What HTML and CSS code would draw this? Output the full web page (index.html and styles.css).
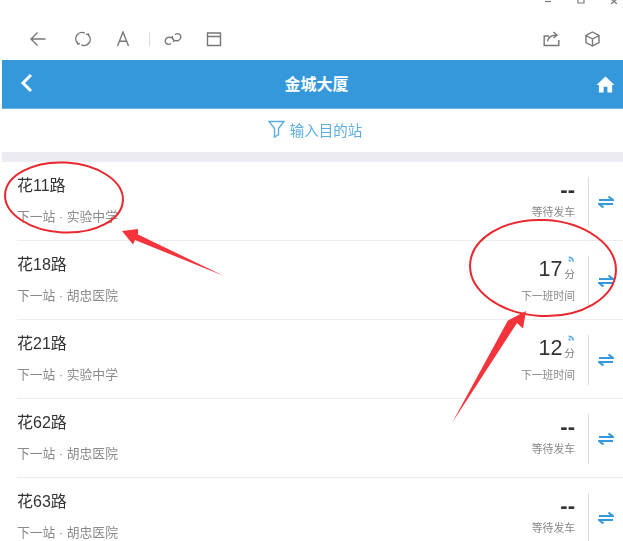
FILE: index.html
```html
<!DOCTYPE html>
<html lang="zh">
<head>
<meta charset="utf-8">
<title>金城大厦</title>
<link rel="stylesheet" href="styles.css">
</head>
<body>
<div class="shot">
  <div class="winbar">
    <svg class="wc" viewBox="0 0 10 4"><path d="M2 1.5H8"/></svg>
    <svg class="wc" viewBox="0 0 10 4"><path d="M2 -1V3H8V-1"/></svg>
    <svg class="wc" viewBox="0 0 10 4"><path d="M2 -1L5 1.5L8 -1M2 4L5 1.5L8 4"/></svg>
  </div>
  <div class="toolbar">
    <svg class="ti t-back" viewBox="0 0 16 16"><path d="M15.5 8H1M7.5 1.5L1 8L7.5 14.5"/></svg>
    <svg class="ti t-ref" viewBox="0 0 16 16"><path d="M2.6 12A6.2 6.2 0 0 1 9.8 2.1M14 5.2L13.3 2.8L11 3.6M13.4 4A6.2 6.2 0 0 1 6.2 13.9M2 10.8L2.7 13.2L5 12.4"/></svg>
    <svg class="ti t-a" viewBox="0 0 14 16"><path d="M1.5 15L7 1L12.5 15M3.4 10.2H10.6"/></svg>
    <span class="tsep"></span>
    <svg class="ti t-link" viewBox="0 0 18 16"><path d="M7 12.5C4 14.5 1 12.5 1.2 9.8C1.4 7 4.6 5.4 7.5 6.6C9.5 7.5 10.2 9.4 9.4 11M11 3.5C14 1.5 17 3.5 16.8 6.2C16.6 9 13.4 10.6 10.5 9.4C8.5 8.5 7.8 6.6 8.6 5"/></svg>
    <svg class="ti t-win" viewBox="0 0 16 16"><path d="M1.5 2H14.5V14.5H1.5ZM1.5 5.5H14.5"/></svg>
    <svg class="ti t-share" viewBox="0 0 17 16"><path d="M6 5H1.2V14.5H15.8V9M4.5 10.5C5 6.5 8 4.3 13 4.3M10.5 1L14 4.3L10.5 7"/></svg>
    <svg class="ti t-cube" viewBox="0 0 15 16"><path d="M7.5 1L14 4.5V11.5L7.5 15L1 11.5V4.5ZM1 4.5L7.5 8L14 4.5M7.5 8V15"/></svg>
  </div>
  <div class="appbar">
    <svg class="back" viewBox="0 0 14 20"><path d="M11 2L3 10L11 18"/></svg>
    <div class="title">金城大厦</div>
    <svg class="home" viewBox="0 0 20 18"><path d="M10 0.5L19.5 9.5H17V17.5H12V11.5H8V17.5H3V9.5H0.5Z"/></svg>
  </div>
  <div class="filter">
    <svg class="funnel" viewBox="0 0 17 18"><path d="M1 1.5H16L10.5 8.5V14.5L6.5 17V8.5Z"/></svg>
    <span>输入目的站</span>
  </div>
  <div class="band"></div>
  <ul class="list">
    <li class="row">
      <div class="info"><div class="name">花11路</div><div class="next">下一站 · 实验中学</div></div>
      <div class="time"><div class="wait">--</div><div class="tl">等待发车</div></div>
      <div class="swap"><svg viewBox="0 0 16 14"><path d="M1 5H15L10.5 1.5M15 9H1L5.5 12.5"/></svg></div>
    </li>
    <li class="row">
      <div class="info"><div class="name">花18路</div><div class="next">下一站 · 胡忠医院</div></div>
      <div class="time"><div class="eta"><span class="num">17</span><span class="unit"><svg class="sig" viewBox="0 0 6 6"><path d="M0.5 1.2A4.5 4.5 0 0 1 5.2 5.6H3.6A3 3 0 0 0 0.5 2.8ZM0.5 3.6A2 2 0 0 1 2.6 5.6H0.5Z"/></svg>分</span></div><div class="tl">下一班时间</div></div>
      <div class="swap"><svg viewBox="0 0 16 14"><path d="M1 5H15L10.5 1.5M15 9H1L5.5 12.5"/></svg></div>
    </li>
    <li class="row">
      <div class="info"><div class="name">花21路</div><div class="next">下一站 · 实验中学</div></div>
      <div class="time"><div class="eta"><span class="num">12</span><span class="unit"><svg class="sig" viewBox="0 0 6 6"><path d="M0.5 1.2A4.5 4.5 0 0 1 5.2 5.6H3.6A3 3 0 0 0 0.5 2.8ZM0.5 3.6A2 2 0 0 1 2.6 5.6H0.5Z"/></svg>分</span></div><div class="tl">下一班时间</div></div>
      <div class="swap"><svg viewBox="0 0 16 14"><path d="M1 5H15L10.5 1.5M15 9H1L5.5 12.5"/></svg></div>
    </li>
    <li class="row">
      <div class="info"><div class="name">花62路</div><div class="next">下一站 · 胡忠医院</div></div>
      <div class="time"><div class="wait">--</div><div class="tl">等待发车</div></div>
      <div class="swap"><svg viewBox="0 0 16 14"><path d="M1 5H15L10.5 1.5M15 9H1L5.5 12.5"/></svg></div>
    </li>
    <li class="row">
      <div class="info"><div class="name">花63路</div><div class="next">下一站 · 胡忠医院</div></div>
      <div class="time"><div class="wait">--</div><div class="tl">等待发车</div></div>
      <div class="swap"><svg viewBox="0 0 16 14"><path d="M1 5H15L10.5 1.5M15 9H1L5.5 12.5"/></svg></div>
    </li>
  </ul>
  <svg class="marks" viewBox="0 0 623 541">
    <ellipse class="ring" cx="64" cy="197.5" rx="59" ry="35" transform="rotate(3 64 197.5)"/>
    <ellipse class="ring" cx="543" cy="268" rx="73" ry="48" transform="rotate(3 543 268)"/>
    <path class="arrow" d="M122 231L138 229L138 234.5L224 276L135 240L133 244.5Z"/>
    <path class="arrow" d="M526 311L523 328.5L517 323L452 423L509 318.5L508 320.5Z"/>
  </svg>
</div>
</body>
</html>
```

FILE: styles.css
```css
* { box-sizing: border-box; }
html, body { margin: 0; padding: 0; background: #fff; }
body { font-family: "Liberation Sans", "Noto Sans CJK SC", sans-serif; overflow: hidden; }
.shot { position: relative; width: 623px; height: 541px; overflow: hidden; padding-left: 2px; filter: blur(0.4px); }

.winbar { height: 5px; display: flex; justify-content: flex-end; gap: 23px; padding-right: 4px; }
.wc { width: 10px; height: 4px; fill: none; stroke: #777; stroke-width: 1.2; }

.toolbar { height: 55px; display: flex; align-items: center; padding-left: 28px; padding-top: 13px; }
.ti { height: 16px; fill: none; stroke: #777; stroke-width: 1.4; flex: none; }
.t-back { width: 16px; }
.t-ref { width: 16px; margin-left: 29px; }
.t-a { width: 14px; margin-left: 25px; }
.tsep { width: 1px; height: 14px; background: #ddd; margin-left: 19px; flex: none; }
.t-link { width: 18px; margin-left: 14px; }
.t-win { width: 16px; margin-left: 24px; }
.t-share { width: 17px; margin-left: 321px; }
.t-cube { width: 15px; margin-left: 25px; }

.appbar { height: 49px; background: #3498db; border-bottom: 1px solid #6db5e6; color: #fff; display: flex; align-items: center; justify-content: space-between; padding: 0 8px 0 18px; }
.back { width: 14px; height: 20px; fill: none; stroke: #fff; stroke-width: 3; margin-top: -2px; }
.title { font-size: 16px; font-weight: 700; margin-left: 3px; margin-top: -2px; }
.home { width: 19px; height: 17px; fill: #fff; margin-top: 0; }

.filter { height: 43px; display: flex; align-items: center; justify-content: center; gap: 5px; color: #5aaee3; font-size: 14.5px; padding-left: 5px; padding-bottom: 2px; }
.funnel { width: 17px; height: 18px; fill: none; stroke: #5aaee3; stroke-width: 1.4; margin-top: -1px; }

.band { height: 10px; background: #ebebf1; }

.list { list-style: none; margin: 0; padding: 0 0 0 15px; }
.row { height: 79px; display: flex; align-items: stretch; border-bottom: 1px solid #ececec; }
.info { flex: 1; padding-top: 14px; }
.name { font-size: 16px; line-height: 20px; color: #333; }
.next { font-size: 12.8px; line-height: 16px; color: #8a8a8a; margin-top: 13px; }

.time { display: flex; flex-direction: column; align-items: flex-end; padding-top: 13px; margin-right: 13px; }
.wait { height: 27px; font-size: 22px; line-height: 30px; font-weight: 700; color: #333; }
.eta { height: 32px; display: flex; align-items: flex-end; color: #333; }
.num { font-size: 21.5px; line-height: 30px; margin-bottom: 2px; }
.unit { position: relative; font-size: 10.5px; line-height: 12px; color: #777; margin-left: 2px; margin-bottom: 6px; }
.sig { position: absolute; right: 0; top: -13px; width: 7px; height: 7px; fill: #5aaee3; }
.tl { font-size: 10.8px; line-height: 14px; color: #888; margin-top: 3px; }

.swap { width: 35px; height: 50px; margin-top: 15px; border-left: 1px solid #ddd; display: flex; align-items: center; justify-content: center; }
.swap svg { width: 16px; height: 14px; fill: none; stroke: #3498db; stroke-width: 2.2; }

.marks { position: absolute; left: 0; top: 0; width: 623px; height: 541px; pointer-events: none; }
.ring { fill: none; stroke: #e8282e; stroke-width: 2; }
.arrow { fill: #f4333a; }
```
